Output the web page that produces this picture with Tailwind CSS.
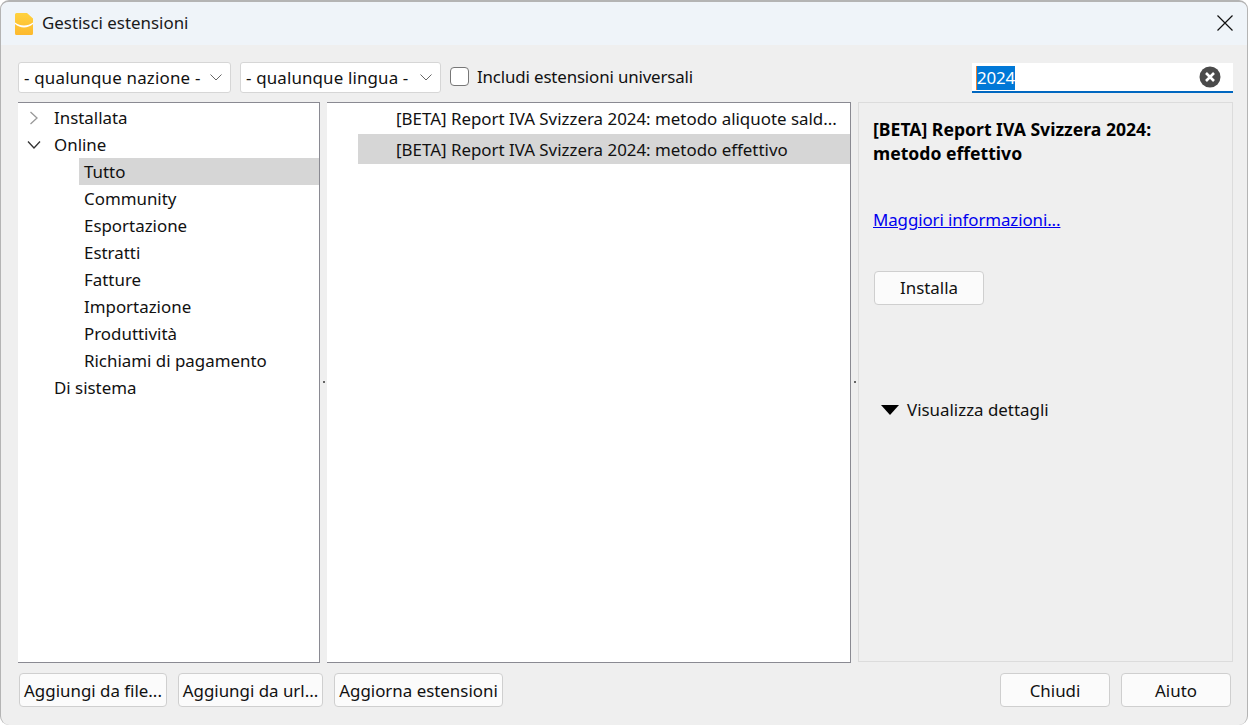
<!DOCTYPE html>
<html lang="it">
<head>
<meta charset="utf-8">
<script src="https://cdn.jsdelivr.net/npm/@tailwindcss/browser@4"></script>
<title>Gestisci estensioni</title>
</head>
<body class="bg-white">
<div class="w-[1248px] h-[725px] flex flex-col overflow-hidden rounded-[9px] border border-b-0 border-[#b4b4b4] border-t-2 bg-[#efefef] text-[16.9px] leading-[22px] text-black font-['Noto_Sans',sans-serif]">
  <header class="h-[43px] shrink-0 flex items-center bg-[#eff4f9] pl-[13px] pr-[14px]">
    <svg width="20" height="24" viewBox="0 0 20 24" class="shrink-0">
      <defs><linearGradient id="g" x1="0" y1="0" x2="0" y2="1"><stop offset="0" stop-color="#ffd23f"/><stop offset="1" stop-color="#fdb92e"/></linearGradient></defs>
      <path d="M2.5 1H13L19 6.5V21.5a1.5 1.5 0 0 1-1.5 1.5h-15A1.5 1.5 0 0 1 1 21.5V2.5A1.5 1.5 0 0 1 2.5 1Z" fill="url(#g)"/>
      <path d="M1 10.5C6 14.5 14 14.5 19 10.5V12C14 16.5 6 16.5 1 12Z" fill="#fff"/>
    </svg>
    <span class="ml-[8px] mb-[2px] text-[#1a1a1a]">Gestisci estensioni</span>
    <svg width="16" height="16" viewBox="0 0 16 16" class="ml-auto mb-[2px]" fill="none" stroke="#111" stroke-width="1.2"><path d="M0.5 0.5L15.5 15.5M15.5 0.5L0.5 15.5"/></svg>
  </header>

  <div class="h-[57px] shrink-0 flex items-center pl-[17px] pr-[14px] pt-[8px]">
    <div class="w-[213px] h-[31px] flex items-center justify-between rounded-[3px] border border-[#d6d6d6] bg-white pl-[5px] pr-[8px] text-[#111]">
      <span class="tracking-[0.2px]">- qualunque nazione -</span>
      <svg width="12" height="7" viewBox="0 0 12 7" fill="none" stroke="#666" stroke-width="1"><path d="M0.5 0.5L6 6L11.5 0.5"/></svg>
    </div>
    <div class="ml-[9px] w-[201px] h-[31px] flex items-center justify-between rounded-[3px] border border-[#d6d6d6] bg-white pl-[5px] pr-[8px] text-[#111]">
      <span class="tracking-[0.15px]">- qualunque lingua -</span>
      <svg width="12" height="7" viewBox="0 0 12 7" fill="none" stroke="#666" stroke-width="1"><path d="M0.5 0.5L6 6L11.5 0.5"/></svg>
    </div>
    <div class="ml-[9px] w-[19px] h-[19px] mb-[3px] rounded-[4px] border border-[#777] bg-white"></div>
    <span class="ml-[8px] mb-[1px] tracking-[-0.15px] text-[#111]">Includi estensioni universali</span>
    <div class="ml-auto w-[261px] h-[30px] flex items-center justify-between bg-white border-b-2 border-[#0067c0] pl-[4px] pr-[12px]">
      <span class="mt-[2px] bg-[#0078d7] text-white h-[24px] border-l border-[#f08030] leading-[24px] tracking-[-0.2px]">2024</span>
      <svg width="22" height="22" viewBox="0 0 22 22"><circle cx="11" cy="11" r="10.5" fill="#4a4a4a"/><path d="M7 7L15 15M15 7L7 15" stroke="#fff" stroke-width="2.6"/></svg>
    </div>
  </div>

  <main class="h-[561px] shrink-0 flex pl-[17px] pr-[14px]">
    <section class="w-[302px] shrink-0 bg-white border-t border-r border-b border-[#8a8a92] pt-[1px]">
      <div class="h-[27px] flex items-center">
        <svg width="10" height="14" viewBox="0 0 10 14" class="ml-[11px]" fill="none" stroke="#999" stroke-width="1.3"><path d="M1.5 1L8 7L1.5 13"/></svg>
        <span class="ml-[15px] text-[#111]">Installata</span>
      </div>
      <div class="h-[27px] flex items-center">
        <svg width="14" height="10" viewBox="0 0 14 10" class="ml-[9px]" fill="none" stroke="#333" stroke-width="1.3"><path d="M1 1.5L7 8L13 1.5"/></svg>
        <span class="ml-[13px] text-[#111]">Online</span>
      </div>
      <div class="ml-[61px] flex flex-col text-[#111]">
        <div class="h-[27px] flex items-center bg-[#d6d6d6] pl-[5px]">Tutto</div>
        <div class="h-[27px] flex items-center pl-[5px]">Community</div>
        <div class="h-[27px] flex items-center pl-[5px]">Esportazione</div>
        <div class="h-[27px] flex items-center pl-[5px]">Estratti</div>
        <div class="h-[27px] flex items-center pl-[5px]">Fatture</div>
        <div class="h-[27px] flex items-center pl-[5px]">Importazione</div>
        <div class="h-[27px] flex items-center pl-[5px]">Produttività</div>
        <div class="h-[27px] flex items-center pl-[5px]">Richiami di pagamento</div>
      </div>
      <div class="h-[27px] flex items-center pl-[36px] text-[#111]">Di sistema</div>
    </section>

    <div class="w-[7px] shrink-0 flex items-center justify-center"><span class="w-[2px] h-[2px] bg-[#666] mb-[1px]"></span></div>

    <section class="w-[524px] shrink-0 bg-white border-t border-r border-b border-[#8a8a92] pl-[31px] pt-[1px] text-[#111]">
      <div class="h-[30px] flex items-center pl-[38px] whitespace-nowrap">[BETA] Report IVA Svizzera 2024: metodo aliquote sald...</div>
      <div class="h-[30px] flex items-center pl-[38px] pt-[1px] bg-[#d6d6d6] whitespace-nowrap">[BETA] Report IVA Svizzera 2024: metodo effettivo</div>
    </section>

    <div class="w-[7px] shrink-0 flex items-center justify-center"><span class="w-[2px] h-[2px] bg-[#666] mb-[1px]"></span></div>

    <section class="w-[375px] shrink-0 mb-[1px] border border-[#dcdcdc] pl-[14px] pr-[14px] pt-[14px] text-[#111]">
      <h2 class="font-bold text-[17.6px] leading-[24px] text-black">[BETA] Report IVA Svizzera 2024:<br>metodo effettivo</h2>
      <a class="block mt-[44px] tracking-[-0.1px] text-[#0000ee] underline">Maggiori informazioni...</a>
      <button class="block mt-[40px] ml-[1px] w-[110px] h-[34px] rounded-[4px] border border-[#cfcfcf] bg-[#fbfbfb]">Installa</button>
      <div class="mt-[94px] ml-[8px] flex items-center">
        <svg width="18" height="10" viewBox="0 0 18 10"><path d="M0 0H18L9 10Z" fill="#000"/></svg>
        <span class="ml-[8px]">Visualizza dettagli</span>
      </div>
    </section>
  </main>

  <footer class="flex items-start pt-[10px] pl-[18px] pr-[16px] text-[#111]">
    <button class="w-[148px] h-[34px] pt-[2px] rounded-[4px] border border-[#cfcfcf] bg-[#fbfbfb] whitespace-nowrap">Aggiungi da file...</button>
    <button class="ml-[11px] w-[145px] h-[34px] pt-[2px] rounded-[4px] border border-[#cfcfcf] bg-[#fbfbfb] whitespace-nowrap">Aggiungi da url...</button>
    <button class="ml-[11px] w-[169px] h-[34px] pt-[2px] rounded-[4px] border border-[#cfcfcf] bg-[#fbfbfb] whitespace-nowrap">Aggiorna estensioni</button>
    <button class="ml-auto w-[110px] h-[34px] pt-[2px] rounded-[4px] border border-[#cfcfcf] bg-[#fbfbfb]">Chiudi</button>
    <button class="ml-[11px] w-[110px] h-[34px] pt-[2px] rounded-[4px] border border-[#cfcfcf] bg-[#fbfbfb]">Aiuto</button>
  </footer>
</div>
</body>
</html>
